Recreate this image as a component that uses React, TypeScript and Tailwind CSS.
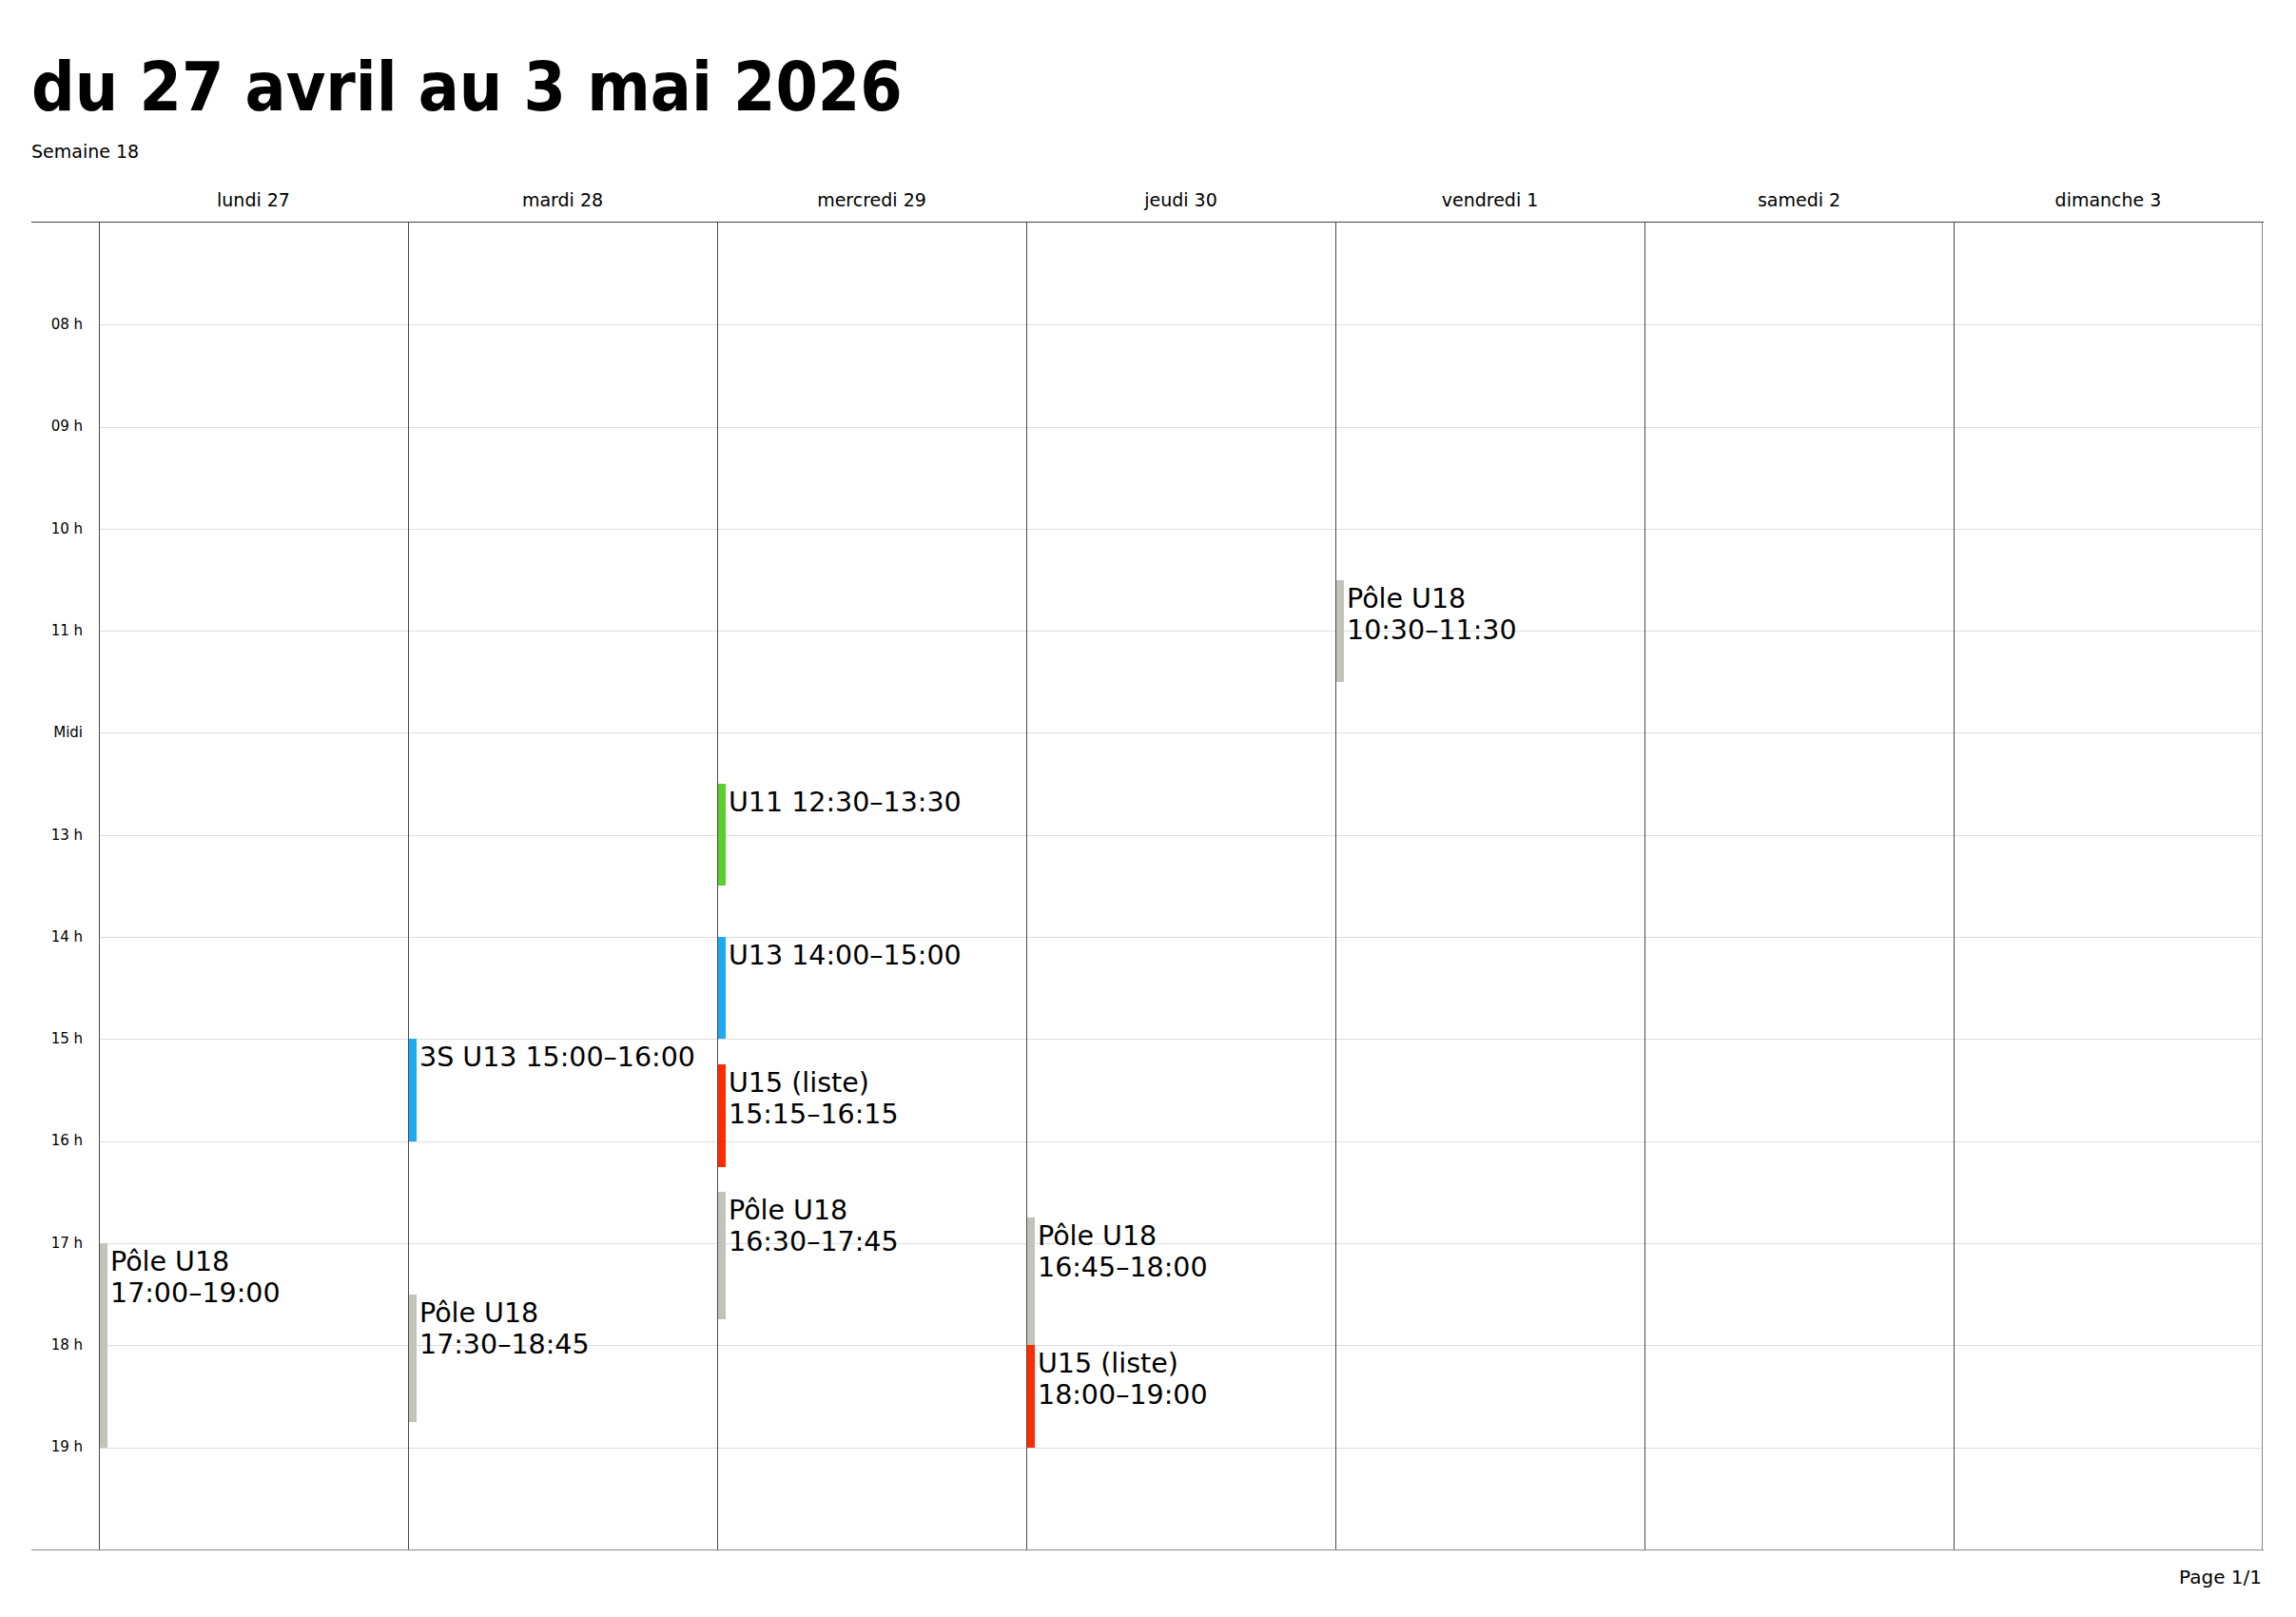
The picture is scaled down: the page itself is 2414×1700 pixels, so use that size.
const HOUR = 107.3;
const START = 7;

type Ev = { day: number; start: number; end: number; color: string; lines: string[] };

const days = ["lundi 27", "mardi 28", "mercredi 29", "jeudi 30", "vendredi 1", "samedi 2", "dimanche 3"];
const hours = ["08 h", "09 h", "10 h", "11 h", "Midi", "13 h", "14 h", "15 h", "16 h", "17 h", "18 h", "19 h"];

const events: Ev[] = [
  { day: 0, start: 17, end: 19, color: "bg-[#c2c4bc]", lines: ["Pôle U18", "17:00–19:00"] },
  { day: 1, start: 15, end: 16, color: "bg-[#1eaaf2]", lines: ["3S U13 15:00–16:00"] },
  { day: 1, start: 17.5, end: 18.75, color: "bg-[#c2c4bc]", lines: ["Pôle U18", "17:30–18:45"] },
  { day: 2, start: 12.5, end: 13.5, color: "bg-[#58d02d]", lines: ["U11 12:30–13:30"] },
  { day: 2, start: 14, end: 15, color: "bg-[#1eaaf2]", lines: ["U13 14:00–15:00"] },
  { day: 2, start: 15.25, end: 16.25, color: "bg-[#fe2c00]", lines: ["U15 (liste)", "15:15–16:15"] },
  { day: 2, start: 16.5, end: 17.75, color: "bg-[#c2c4bc]", lines: ["Pôle U18", "16:30–17:45"] },
  { day: 3, start: 16.75, end: 18, color: "bg-[#c2c4bc]", lines: ["Pôle U18", "16:45–18:00"] },
  { day: 3, start: 18, end: 19, color: "bg-[#fe2c00]", lines: ["U15 (liste)", "18:00–19:00"] },
  { day: 4, start: 10.5, end: 11.5, color: "bg-[#c2c4bc]", lines: ["Pôle U18", "10:30–11:30"] },
];

function DayColumn({ index }: { index: number }) {
  const last = index === days.length - 1;
  return (
    <div className={"relative w-[325px] flex flex-col border-l border-[#4a4a4a] " + (last ? "border-r border-r-[#8a8a8a]" : "")}>
      {Array.from({ length: 13 }).map((_, i) => (
        <div key={i} className={"h-[107.3px] " + (i > 0 ? "border-t border-[#dedede]" : "")} />
      ))}
      {events
        .filter((e) => e.day === index)
        .map((e, i) => (
          <div
            key={i}
            className="absolute left-0 right-0 flex"
            style={{ top: (e.start - START) * HOUR, height: (e.end - e.start) * HOUR }}
          >
            <div className={"w-[8px] h-full shrink-0 " + e.color} />
            <div className="pl-[3px] pt-[3px] text-[28.5px] leading-[33px] text-black">
              {e.lines.map((l) => (
                <div key={l} className="whitespace-nowrap">{l}</div>
              ))}
            </div>
          </div>
        ))}
    </div>
  );
}

export default function App() {
  return (
    <div className="min-h-screen bg-white pl-[33px] text-black" style={{ fontFamily: '"DejaVu Sans", sans-serif' }}>
      {/* Heading */}
      <h1
        className="pt-[56px] text-[71px] leading-[72px] font-bold whitespace-nowrap"
        style={{ fontFamily: '"DejaVu Sans Condensed", "DejaVu Sans", sans-serif', fontStretch: "condensed" }}
      >
        du 27 avril au 3 mai 2026
      </h1>
      <div className="mt-[20px] text-[19px] leading-[22px]">Semaine 18</div>

      {/* Day headers */}
      <div className="mt-[29px] flex text-[19px] leading-[22px]">
        <div className="w-[71px] shrink-0" />
        {days.map((d) => (
          <div key={d} className="w-[325px] text-center">{d}</div>
        ))}
      </div>

      {/* Grid */}
      <div className="mt-[12px] w-[2347px] flex border-t border-t-[#444] border-b border-b-[#8a8a8a]">
        <div className="w-[71px] shrink-0 flex flex-col pt-[53.65px] text-[15px]">
          {hours.map((h) => (
            <div key={h} className="h-[107.3px] flex items-center justify-end pr-[17px]">{h}</div>
          ))}
        </div>
        {days.map((d, i) => (
          <DayColumn key={d} index={i} />
        ))}
      </div>

      <div className="w-[2347px] mt-[16px] text-right text-[20px] leading-[24px] pr-[2px]">Page 1/1</div>
    </div>
  );
}
